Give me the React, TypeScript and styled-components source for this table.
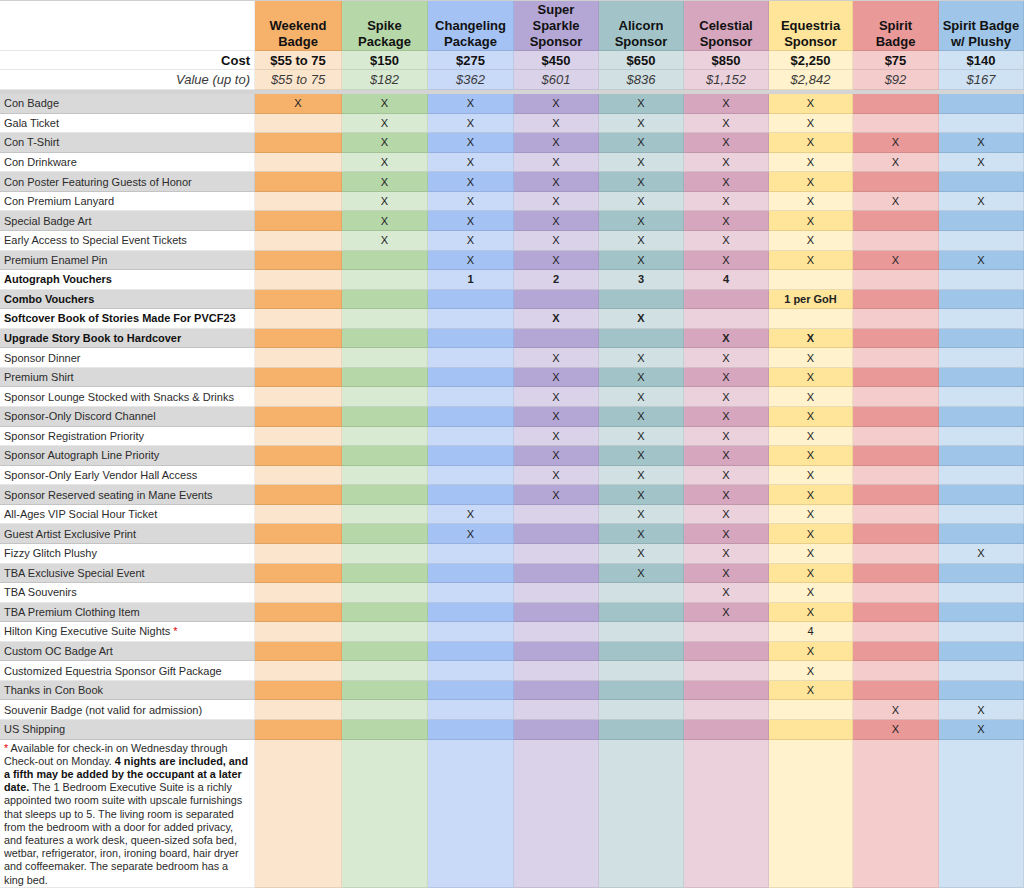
import React from 'react';
import styled, { createGlobalStyle } from 'styled-components';

const GlobalStyle = createGlobalStyle`
  html, body { margin: 0; padding: 0; background: #ffffff; }
  body { font-family: "Liberation Sans", Arial, sans-serif; color: #222; }
  * { box-sizing: border-box; }
`;

type Tier = { name: React.ReactNode; dark: string; light: string; cost: string; value: string };

const tiers: Tier[] = [
  { name: <>Weekend<br />Badge</>, dark: '#f6b26b', light: '#fce5cd', cost: '$55 to 75', value: '$55 to 75' },
  { name: <>Spike<br />Package</>, dark: '#b6d7a8', light: '#d9ead3', cost: '$150', value: '$182' },
  { name: <>Changeling<br />Package</>, dark: '#a4c2f4', light: '#c9daf8', cost: '$275', value: '$362' },
  { name: <>Super<br />Sparkle<br />Sponsor</>, dark: '#b4a7d6', light: '#d9d2e9', cost: '$450', value: '$601' },
  { name: <>Alicorn<br />Sponsor</>, dark: '#a2c4c9', light: '#d0e0e3', cost: '$650', value: '$836' },
  { name: <>Celestial<br />Sponsor</>, dark: '#d5a6bd', light: '#ead1dc', cost: '$850', value: '$1,152' },
  { name: <>Equestria<br />Sponsor</>, dark: '#ffe599', light: '#fff2cc', cost: '$2,250', value: '$2,842' },
  { name: <>Spirit<br />Badge</>, dark: '#ea9999', light: '#f4cccc', cost: '$75', value: '$92' },
  { name: <>Spirit Badge<br />w/ Plushy</>, dark: '#9fc5e8', light: '#cfe2f3', cost: '$140', value: '$167' },
];

type Item = { label: string; marks: string; bold?: boolean; star?: boolean; values?: Record<number, string> };

// marks: 9-char string, 'x' = X, '.' = empty
const items: Item[] = [
  { label: 'Con Badge', marks: 'xxxxxxx..' },
  { label: 'Gala Ticket', marks: '.xxxxxx..' },
  { label: 'Con T-Shirt', marks: '.xxxxxxxx' },
  { label: 'Con Drinkware', marks: '.xxxxxxxx' },
  { label: 'Con Poster Featuring Guests of Honor', marks: '.xxxxxx..' },
  { label: 'Con Premium Lanyard', marks: '.xxxxxxxx' },
  { label: 'Special Badge Art', marks: '.xxxxxx..' },
  { label: 'Early Access to Special Event Tickets', marks: '.xxxxxx..' },
  { label: 'Premium Enamel Pin', marks: '..xxxxxxx' },
  { label: 'Autograph Vouchers', marks: '.........', bold: true, values: { 2: '1', 3: '2', 4: '3', 5: '4' } },
  { label: 'Combo Vouchers', marks: '.........', bold: true, values: { 6: '1 per GoH' } },
  { label: 'Softcover Book of Stories Made For PVCF23', marks: '...xx....', bold: true },
  { label: 'Upgrade Story Book to Hardcover', marks: '.....xx..', bold: true },
  { label: 'Sponsor Dinner', marks: '...xxxx..' },
  { label: 'Premium Shirt', marks: '...xxxx..' },
  { label: 'Sponsor Lounge Stocked with Snacks & Drinks', marks: '...xxxx..' },
  { label: 'Sponsor-Only Discord Channel', marks: '...xxxx..' },
  { label: 'Sponsor Registration Priority', marks: '...xxxx..' },
  { label: 'Sponsor Autograph Line Priority', marks: '...xxxx..' },
  { label: 'Sponsor-Only Early Vendor Hall Access', marks: '...xxxx..' },
  { label: 'Sponsor Reserved seating in Mane Events', marks: '...xxxx..' },
  { label: 'All-Ages VIP Social Hour Ticket', marks: '..x.xxx..' },
  { label: 'Guest Artist Exclusive Print', marks: '..x.xxx..' },
  { label: 'Fizzy Glitch Plushy', marks: '....xxx.x' },
  { label: 'TBA Exclusive Special Event', marks: '....xxx..' },
  { label: 'TBA Souvenirs', marks: '.....xx..' },
  { label: 'TBA Premium Clothing Item', marks: '.....xx..' },
  { label: 'Hilton King Executive Suite Nights', marks: '.........', star: true, values: { 6: '4' } },
  { label: 'Custom OC Badge Art', marks: '......x..' },
  { label: 'Customized Equestria Sponsor Gift Package', marks: '......x..' },
  { label: 'Thanks in Con Book', marks: '......x..' },
  { label: 'Souvenir Badge (not valid for admission)', marks: '.......xx' },
  { label: 'US Shipping', marks: '.......xx' },
];

const COLUMNS = '255px 87px 86px 86px 85px 85px 85px 84px 86px 85px';

const Sheet = styled.div`
  width: 1024px;
  border-top: 1px solid #cfcfcf;
  font-family: "Liberation Sans", Arial, sans-serif;
`;

const Row = styled.div<{ $h: number }>`
  display: grid;
  grid-template-columns: ${COLUMNS};
  height: ${(p) => p.$h}px;
`;

const Cell = styled.div<{ $bg: string; $align?: 'left' | 'center' | 'right' }>`
  display: flex;
  align-items: center;
  justify-content: ${(p) => (p.$align === 'left' ? 'flex-start' : p.$align === 'right' ? 'flex-end' : 'center')};
  background: ${(p) => p.$bg};
  border-right: 1px solid rgba(0, 0, 0, 0.07);
  border-bottom: 1px solid rgba(0, 0, 0, 0.09);
  padding: 0 4px;
  overflow: hidden;
  white-space: nowrap;
`;

const HeadCell = styled(Cell)`
  align-items: flex-end;
  padding: 0 2px 0;
  font-size: 13px;
  font-weight: 700;
  line-height: 16px;
  text-align: center;
  color: #111;
  white-space: normal;
`;

const CostText = styled.span`
  font-size: 13px;
  font-weight: 700;
  color: #111;
  padding-top: 1px;
`;

const ValueText = styled.span`
  font-size: 13px;
  font-style: italic;
  color: #3a3a3a;
`;

const LabelText = styled.span<{ $bold?: boolean }>`
  font-size: 11px;
  font-weight: ${(p) => (p.$bold ? 700 : 400)};
  color: ${(p) => (p.$bold ? '#111' : '#2b2b2b')};
`;

const Mark = styled.span<{ $bold?: boolean }>`
  font-size: 11px;
  font-weight: ${(p) => (p.$bold ? 700 : 400)};
  color: #222;
`;

const Star = styled.span<{ $gap?: boolean }>`
  color: #e00000;
  margin-left: ${(p) => (p.$gap ? '3px' : '0')};
`;

const Divider = styled.div`
  height: 4px;
  background: #d4d4d4;
`;

const NoteCell = styled.div<{ $bg: string }>`
  background: ${(p) => p.$bg};
  border-right: 1px solid rgba(0, 0, 0, 0.07);
  border-bottom: 1px solid rgba(0, 0, 0, 0.09);
  padding: 2px 4px 0 4px;
  font-size: 10.8px;
  line-height: 13.2px;
  color: #2b2b2b;
`;

const Strong = styled.b`
  color: #111;
`;

const ROW_H = 646 / 33;

export default function App() {
  return (
    <>
      <GlobalStyle />
      <Sheet>
        <Row $h={50}>
          <Cell $bg="#ffffff" />
          {tiers.map((t, i) => (
            <HeadCell key={i} $bg={t.dark}>
              <span>{t.name}</span>
            </HeadCell>
          ))}
        </Row>
        <Row $h={19}>
          <Cell $bg="#ffffff" $align="right">
            <CostText>Cost</CostText>
          </Cell>
          {tiers.map((t, i) => (
            <Cell key={i} $bg={t.light}>
              <CostText>{t.cost}</CostText>
            </Cell>
          ))}
        </Row>
        <Row $h={20}>
          <Cell $bg="#ffffff" $align="right">
            <ValueText>Value (up to)</ValueText>
          </Cell>
          {tiers.map((t, i) => (
            <Cell key={i} $bg={t.light}>
              <ValueText>{t.value}</ValueText>
            </Cell>
          ))}
        </Row>
        <Divider />
        {items.map((it, r) => {
          const dark = r % 2 === 0;
          return (
            <Row key={r} $h={ROW_H}>
              <Cell $bg={dark ? '#d9d9d9' : '#ffffff'} $align="left">
                <LabelText $bold={it.bold}>
                  {it.label}
                  {it.star && <Star $gap>*</Star>}
                </LabelText>
              </Cell>
              {tiers.map((t, c) => {
                const v = it.values?.[c] ?? (it.marks[c] === 'x' ? 'X' : '');
                return (
                  <Cell key={c} $bg={dark ? t.dark : t.light}>
                    {v && <Mark $bold={it.bold}>{v}</Mark>}
                  </Cell>
                );
              })}
            </Row>
          );
        })}
        <Row $h={148}>
          <NoteCell $bg="#ffffff">
            <Star>*</Star> Available for check-in on Wednesday through Check-out on Monday.{' '}
            <Strong>4 nights are included, and a fifth may be added by the occupant at a later date.</Strong> The 1
            Bedroom Executive Suite is a richly appointed two room suite with upscale furnishings that sleeps up to 5.
            The living room is separated from the bedroom with a door for added privacy, and features a work desk,
            queen-sized sofa bed, wetbar, refrigerator, iron, ironing board, hair dryer and coffeemaker. The separate
            bedroom has a king bed.
          </NoteCell>
          {tiers.map((t, i) => (
            <NoteCell key={i} $bg={t.light} />
          ))}
        </Row>
      </Sheet>
    </>
  );
}
